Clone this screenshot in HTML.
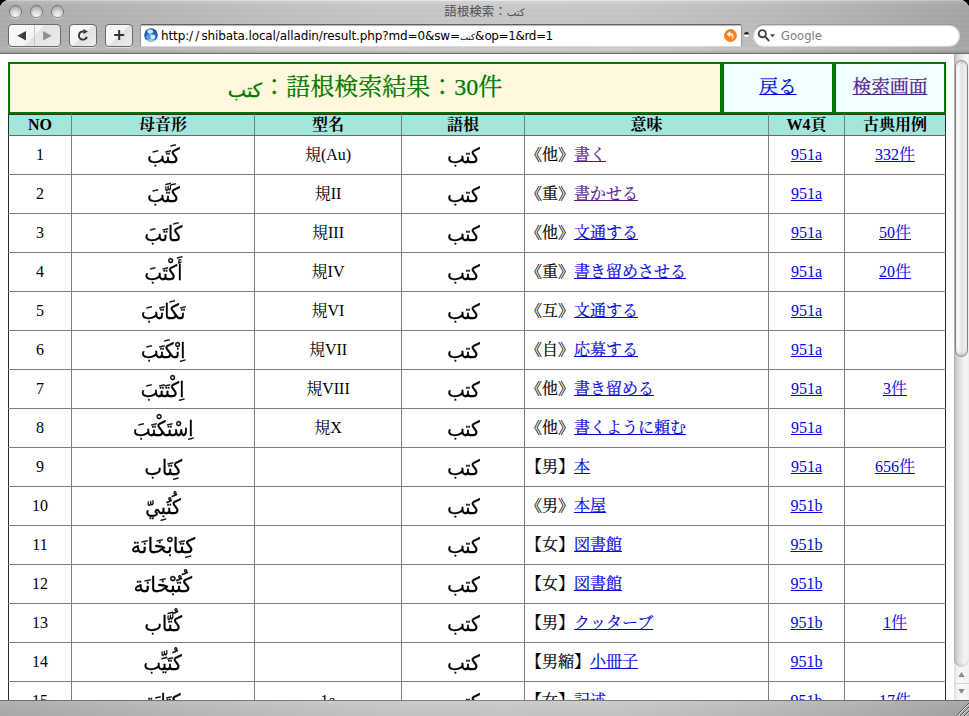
<!DOCTYPE html>
<html lang="ja">
<head>
<meta charset="utf-8">
<title>語根検索：كتب</title>
<style>
html,body{margin:0;padding:0;}
body{width:969px;height:716px;overflow:hidden;background:#000;position:relative;
  font-family:"Liberation Serif","Noto Serif CJK JP","Noto Serif CJK SC","DejaVu Sans",serif;font-size:16px;color:#000;}
#win{position:absolute;left:0;top:0;width:969px;height:716px;overflow:hidden;border-radius:9px 9px 0 0;background:#fff;}
#top{position:absolute;left:0;top:0;width:969px;height:53px;border-bottom:1px solid #6b6f72;
  background-color:#bdbdbd;
  background-image:
    linear-gradient(90deg,rgba(0,0,0,.13) 0,rgba(0,0,0,.09) 12%,rgba(0,0,0,.03) 28%,rgba(0,0,0,0) 40%,rgba(255,255,255,.03) 52%,rgba(0,0,0,0) 64%,rgba(0,0,0,.05) 78%,rgba(0,0,0,.12) 92%,rgba(0,0,0,.17) 100%),
    repeating-linear-gradient(180deg,rgba(255,255,255,.025) 0,rgba(255,255,255,.025) 1px,rgba(0,0,0,.012) 1px,rgba(0,0,0,.012) 2px,rgba(0,0,0,0) 2px,rgba(0,0,0,0) 3px),
    repeating-linear-gradient(180deg,rgba(0,0,0,.012) 0,rgba(0,0,0,.012) 2px,rgba(255,255,255,.018) 2px,rgba(255,255,255,.018) 5px),
    linear-gradient(180deg,#fafafa 0,#d8d8d8 1px,#cbcbcb 3px,#c6c6c6 10px,#c5c5c5 20px,#c6c6c6 30px,#c8c8c8 46px,#cdcdcd 50px,#bababa 52px,#a8a8a8 53px);}
#title{position:absolute;left:0;top:3px;width:969px;text-align:center;font-family:"DejaVu Sans","Noto Sans CJK JP",sans-serif;font-size:12.5px;line-height:17px;color:#505050;}
.tl{position:absolute;top:6px;width:11px;height:11px;border-radius:50%;
  background:radial-gradient(circle at 50% 88%,#f6f6f6 0,#e0e0e0 35%,#b4b4b4 72%,#8a8a8a 100%);box-shadow:0 0 0 1px rgba(95,95,95,.75), 0 2px 1px rgba(255,255,255,.5);}
.btn svg{position:absolute;left:0;top:0;}
.btn{position:absolute;top:24px;height:21px;border:1px solid #6a6a6a;border-radius:4px;
  background:linear-gradient(135deg,#fbfbfb 0,#f4f4f4 48%,#e2e2e2 52%,#ececec 100%);box-shadow:0 1px 0 rgba(255,255,255,.55);}
#url{position:absolute;left:141px;top:25px;width:600px;height:21px;background:#fff;box-shadow:inset 0 1px 1px rgba(0,0,0,.3),0 -1px 0 0 #5e5e5e,-1px 0 0 0 #9a9a9a,1px 0 0 0 #9a9a9a,0 1px 0 0 #d9d9d9;}
#globe{position:absolute;left:3px;top:3px;}
#snap{position:absolute;left:583px;top:4px;}
#urltext{position:absolute;left:20px;top:2px;font-family:"DejaVu Sans","Noto Sans CJK JP",sans-serif;font-size:12px;line-height:19px;color:#000;white-space:nowrap;letter-spacing:-0.12px;}
#knob{position:absolute;left:744px;top:32px;width:5px;height:5px;border-radius:50%;background:linear-gradient(180deg,#111 0,#222 40%,#fff 60%,#fff 100%);}
#search{position:absolute;left:753px;top:24px;width:207px;height:22px;border-radius:11px;background:#fff;box-shadow:inset 0 1px 2px rgba(0,0,0,.55),0 1px 0 rgba(255,255,255,.5);}
#search span{position:absolute;left:28px;top:2px;font-family:"DejaVu Sans",sans-serif;font-size:11.6px;line-height:20px;color:#7d7d7d;}
#bottom{position:absolute;left:0;top:700px;width:969px;height:16px;
  background-color:#b9b9b9;
  background-image:
    linear-gradient(90deg,rgba(0,0,0,.13) 0,rgba(0,0,0,.09) 12%,rgba(0,0,0,.03) 28%,rgba(0,0,0,0) 40%,rgba(255,255,255,.03) 52%,rgba(0,0,0,0) 64%,rgba(0,0,0,.05) 78%,rgba(0,0,0,.12) 92%,rgba(0,0,0,.17) 100%),
    repeating-linear-gradient(180deg,rgba(255,255,255,.025) 0,rgba(255,255,255,.025) 1px,rgba(0,0,0,.012) 1px,rgba(0,0,0,.012) 2px,rgba(0,0,0,0) 2px,rgba(0,0,0,0) 3px),
    linear-gradient(180deg,#7a7a7a 0,#7a7a7a 1px,#cdcdcd 1px,#c8c8c8 4px,#c5c5c5 10px,#c0c0c0 16px);}
/* scrollbar */
#sb{position:absolute;left:954px;top:54px;width:15px;height:646px;background:linear-gradient(90deg,#dcdcdc 0,#f1f1f1 3px,#f8f8f8 8px,#f2f2f2 15px);}
#track{position:absolute;left:0;top:0;width:15px;height:613px;border-radius:0 0 8px 8px;background:linear-gradient(90deg,#b2b2b2 0,#cbcbcb 2px,#e2e2e2 6px,#f2f2f2 10px,#f4f4f4 15px);box-shadow:inset 0 -2px 2px rgba(0,0,0,.10);}
#arrows{position:absolute;left:0;top:612px;}
#thumb{position:absolute;left:1px;top:6px;width:13px;height:297px;border-radius:7px;border:1px solid #858585;box-sizing:border-box;
  background:linear-gradient(90deg,#fdfdfd 0,#f4f4f4 30%,#e2e2e2 52%,#f8f8f8 100%);box-shadow:inset 0 -2px 2px rgba(0,0,0,.16),inset 0 2px 2px rgba(0,0,0,.10);}
/* page */
#page{position:absolute;left:0;top:54px;width:954px;height:646px;overflow:hidden;background:#fff;}
#hd{position:absolute;left:8px;top:8px;width:938px;height:52px;}
#hd div{position:absolute;top:0;height:48px;border:2px solid #007800;text-align:center;-webkit-text-stroke:0.25px;}
#h1{left:0;width:710px;background:#fff8dc;color:#007800;font-size:24px;line-height:46px;}
#h1 .ar{position:relative;top:2px;font-size:19.5px;-webkit-text-stroke:0.3px #007800;}
#h2{left:714px;width:108px;background:#f0ffff;font-size:18.72px;line-height:46px;}
#h3{left:826px;width:108px;background:#f0ffff;font-size:18.72px;line-height:46px;}
a{color:#0505e0;text-decoration:underline;}
a.v{color:#551a8b;}
table#t{position:absolute;left:8px;top:60px;width:937px;border-collapse:collapse;table-layout:fixed;}
#t th,#t td{border:1px solid #7e7e7e;padding:0;text-align:center;vertical-align:middle;}
#t tr>:first-child{border-left-color:#2a2a2a;}
#t tr>:last-child{border-right-color:#2a2a2a;}
#t tr>th{border-top-color:#333;border-bottom-color:#5d6b69;}
#t th{height:20px;background:#a6e5dc;font-weight:bold;font-size:16px;line-height:20px;}
#t td{height:38px;font-size:16px;line-height:20px;}
#t td.m{text-align:left;padding-left:1px;-webkit-text-stroke:0.2px;}
.ar{font-family:"DejaVu Sans",sans-serif;}
#t td.ar{font-size:21px;line-height:30px;height:36px;padding-top:2px;-webkit-text-stroke:0.3px #000;}
#t td.ar span{display:inline-block;transform:scaleX(.885);}
#t td.ar span.w{transform:scaleX(.98);}
</style>
</head>
<body>
<div id="win">
 <div id="page">
  <div id="hd">
   <div id="h1"><span class="ar">كتب</span>：語根検索結果：30件</div>
   <div id="h2"><a href="#">戻る</a></div>
   <div id="h3"><a class="v" href="#">検索画面</a></div>
  </div>
  <table id="t">
   <colgroup><col style="width:63px"><col style="width:183px"><col style="width:147px"><col style="width:123px"><col style="width:244px"><col style="width:76px"><col style="width:101px"></colgroup>
   <tr><th>NO</th><th>母音形</th><th>型名</th><th>語根</th><th>意味</th><th>W4頁</th><th>古典用例</th></tr>
   <tr><td>1</td><td class="ar"><span>كَتَبَ</span></td><td>規(Au)</td><td class="ar"><span>كتب</span></td><td class="m">《他》<a class="v" href="#">書く</a></td><td><a href="#">951a</a></td><td><a href="#">332件</a></td></tr>
   <tr><td>2</td><td class="ar"><span>كَتَّبَ</span></td><td>規II</td><td class="ar"><span>كتب</span></td><td class="m">《重》<a class="v" href="#">書かせる</a></td><td><a href="#">951a</a></td><td></td></tr>
   <tr><td>3</td><td class="ar"><span>كَاتَبَ</span></td><td>規III</td><td class="ar"><span>كتب</span></td><td class="m">《他》<a href="#">文通する</a></td><td><a href="#">951a</a></td><td><a href="#">50件</a></td></tr>
   <tr><td>4</td><td class="ar"><span>أَكْتَبَ</span></td><td>規IV</td><td class="ar"><span>كتب</span></td><td class="m">《重》<a href="#">書き留めさせる</a></td><td><a href="#">951a</a></td><td><a href="#">20件</a></td></tr>
   <tr><td>5</td><td class="ar"><span>تَكَاتَبَ</span></td><td>規VI</td><td class="ar"><span>كتب</span></td><td class="m">《互》<a href="#">文通する</a></td><td><a href="#">951a</a></td><td></td></tr>
   <tr><td>6</td><td class="ar"><span>اِنْكَتَبَ</span></td><td>規VII</td><td class="ar"><span>كتب</span></td><td class="m">《自》<a href="#">応募する</a></td><td><a href="#">951a</a></td><td></td></tr>
   <tr><td>7</td><td class="ar"><span>اِكْتَتَبَ</span></td><td>規VIII</td><td class="ar"><span>كتب</span></td><td class="m">《他》<a href="#">書き留める</a></td><td><a href="#">951a</a></td><td><a href="#">3件</a></td></tr>
   <tr><td>8</td><td class="ar"><span>اِسْتَكْتَبَ</span></td><td>規X</td><td class="ar"><span>كتب</span></td><td class="m">《他》<a href="#">書くように頼む</a></td><td><a href="#">951a</a></td><td></td></tr>
   <tr><td>9</td><td class="ar"><span>كِتَاب</span></td><td></td><td class="ar"><span>كتب</span></td><td class="m">【男】<a href="#">本</a></td><td><a href="#">951a</a></td><td><a href="#">656件</a></td></tr>
   <tr><td>10</td><td class="ar"><span>كُتُبِيّ</span></td><td></td><td class="ar"><span>كتب</span></td><td class="m">《男》<a href="#">本屋</a></td><td><a href="#">951b</a></td><td></td></tr>
   <tr><td>11</td><td class="ar"><span class="w">كِتَابْخَانَة</span></td><td></td><td class="ar"><span>كتب</span></td><td class="m">【女】<a href="#">図書館</a></td><td><a href="#">951b</a></td><td></td></tr>
   <tr><td>12</td><td class="ar"><span class="w">كُتُبْخَانَة</span></td><td></td><td class="ar"><span>كتب</span></td><td class="m">【女】<a href="#">図書館</a></td><td><a href="#">951b</a></td><td></td></tr>
   <tr><td>13</td><td class="ar"><span>كُتَّاب</span></td><td></td><td class="ar"><span>كتب</span></td><td class="m">【男】<a href="#">クッターブ</a></td><td><a href="#">951b</a></td><td><a href="#">1件</a></td></tr>
   <tr><td>14</td><td class="ar"><span>كُتَيِّب</span></td><td></td><td class="ar"><span>كتب</span></td><td class="m">【男縮】<a href="#">小冊子</a></td><td><a href="#">951b</a></td><td></td></tr>
   <tr><td>15</td><td class="ar"><span>كِتَابَة</span></td><td>1a</td><td class="ar"><span>كتب</span></td><td class="m">【女】<a href="#">記述</a></td><td><a href="#">951b</a></td><td><a href="#">17件</a></td></tr>
  </table>
 </div>
 <div id="sb"><div id="track"></div><div id="thumb"></div><svg id="arrows" width="15" height="34" viewBox="0 0 15 34"><path d="M0 17.5H15" stroke="#d4d4d4" stroke-width="1"/><path d="M7.5 6L10.6 11H4.4Z" fill="#8a8a8a"/><path d="M7.5 28L10.6 23H4.4Z" fill="#8a8a8a"/></svg></div>
 <div id="top">
  <div class="tl" style="left:9.5px"></div><div class="tl" style="left:30.5px"></div><div class="tl" style="left:51.5px"></div>
  <div id="title">語根検索：<span class="ar" style="font-size:10.3px">كتب</span></div>
  <div class="btn" style="left:8px;width:51px"><svg width="51" height="21" viewBox="0 0 51 21"><path d="M25.5 0V21" stroke="#c9c9c9" stroke-width="1"/><path d="M8.3 10.8L17 6V15.6Z" fill="#3c3c3c"/><path d="M42.7 10.8L34.1 6V15.6Z" fill="#8e8e8e"/></svg></div>
  <div class="btn" style="left:69px;width:26px"><svg width="26" height="21" viewBox="0 0 26 21"><path d="M16.9 11.9A4.1 4.1 0 1 1 13.6 6.45" fill="none" stroke="#3a3a3a" stroke-width="2"/><path d="M13.3 3.9L18 6.6L13.3 9.3Z" fill="#3a3a3a"/></svg></div>
  <div class="btn" style="left:105px;width:26px"><svg width="26" height="21" viewBox="0 0 26 21"><path d="M8.2 9.9H18.2M13.2 4.9V14.9" stroke="#333" stroke-width="2" fill="none"/></svg></div>
  <div id="url"><svg id="globe" width="14" height="14" viewBox="0 0 14 14"><defs><radialGradient id="gg" cx="50%" cy="62%" r="58%"><stop offset="0" stop-color="#5fa8f0"/><stop offset=".55" stop-color="#2f74d6"/><stop offset=".85" stop-color="#1a50b0"/><stop offset="1" stop-color="#274c86"/></radialGradient><filter id="gb" x="-20%" y="-20%" width="140%" height="140%"><feGaussianBlur stdDeviation=".55"/></filter><clipPath id="gc"><circle cx="7" cy="7" r="6.7"/></clipPath></defs><circle cx="7" cy="7" r="6.8" fill="url(#gg)"/><g clip-path="url(#gc)" filter="url(#gb)"><ellipse cx="6.2" cy="3.3" rx="2.9" ry="2" fill="#dff4ff" opacity=".9"/><path d="M5.6 4.6L8.2 7.2L7.2 8.2L4.8 5.6Z" fill="#bfe4ff" opacity=".75"/><ellipse cx="8.9" cy="8.9" rx="2.5" ry="2.2" fill="#d2f6ff" opacity=".95"/><ellipse cx="7" cy="12.6" rx="4.2" ry="1.5" fill="#a8dcff" opacity=".8"/><ellipse cx="3.6" cy="9.2" rx="1.3" ry="1.8" fill="#7fbdf5" opacity=".6"/></g></svg><svg id="snap" width="13" height="13" viewBox="0 0 13 13"><circle cx="6.5" cy="6.5" r="6.4" fill="#f5821f"/><path d="M6.1 2.2L2.6 5.2L6.1 8.2V6.3C7.9 6.2 8.9 7.2 8.2 9.6C7.9 10.4 8.4 10.6 8.9 9.9C10.6 7.4 9.3 4.2 6.1 4.1Z" fill="#fff"/></svg><div id="urltext">http:<span style="letter-spacing:2.1px">//</span>shibata.local/alladin/result.php?md=0&amp;sw=<span class="ar" style="font-size:8.6px">كتب</span><span style="letter-spacing:-0.4px">&amp;op=1&amp;rd=1</span></div></div>
  <div id="knob"></div>
  <div id="search"><svg width="24" height="22" viewBox="0 0 24 22" style="position:absolute;left:0;top:0"><circle cx="9.3" cy="9.7" r="3.6" fill="none" stroke="#444" stroke-width="1.9"/><path d="M11.9 12.4L15.6 16.4" stroke="#444" stroke-width="2" stroke-linecap="round"/><path d="M17 10.2H22L19.5 13.2Z" fill="#444"/></svg><span>Google</span></div>
 </div>
 <div id="bottom"><svg width="16" height="16" viewBox="0 0 16 16" style="position:absolute;right:0;top:0"><path d="M3 16L16 3M7 16L16 7M11 16L16 11" stroke="#4a4a4a" stroke-width=".9"/><path d="M4.2 16L16 4.2M8.2 16L16 8.2M12.2 16L16 12.2" stroke="#ededed" stroke-width=".9"/></svg></div>
</div>
</body>
</html>
